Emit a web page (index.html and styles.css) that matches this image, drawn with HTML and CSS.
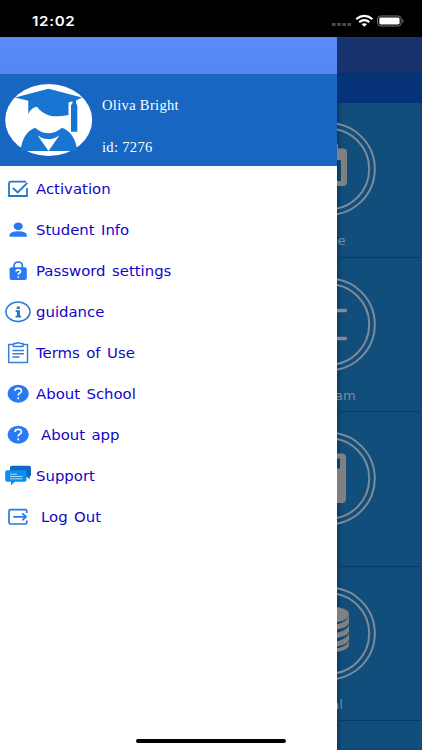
FILE: index.html
```html
<!DOCTYPE html>
<html lang="en">
<head>
<meta charset="utf-8">
<title>Student menu</title>
<link rel="stylesheet" href="styles.css">
</head>
<body>
<div class="phone">
  <header class="status">
    <span class="time">12:02</span>
    <svg class="signals" width="74" height="14" viewBox="0 0 74 14">
      <g fill="#4b4b4b"><rect x="1" y="9" width="3.5" height="3"/><rect x="6.3" y="9" width="3.5" height="3"/><rect x="11.4" y="9" width="3.5" height="3"/><rect x="16.5" y="9" width="3.5" height="3"/></g>
      <g fill="none" stroke="#fff" stroke-width="2.1"><path d="M25.2 5.1Q33.3-1.3 41.4 5.1"/><path d="M28.2 8.1Q33.3 4 38.4 8.1"/></g>
      <path d="M30.5 10.1Q33.3 8.2 36.1 10.1L33.3 12.7Z" fill="#fff"/>
      <rect x="46.6" y="2" width="23.6" height="10" rx="3" fill="none" stroke="#777"/>
      <rect x="48.3" y="3.6" width="20.3" height="6.8" rx="1.4" fill="#fff"/>
      <path d="M71.5 5v4q1.2-.5 1.2-2t-1.2-2" fill="#777"/>
    </svg>
  </header>
  <div class="body">
    <aside class="drawer">
      <div class="bar"></div>
      <section class="profile">
        <svg class="avatar" width="88" height="72" viewBox="0 0 88 72">
          <ellipse cx="43.7" cy="36" rx="43.5" ry="36" fill="#fff"/>
          <g fill="#1875d2">
            <path d="M10 13.500L43.500 4.700L77 13.500L71 16.500V19L72.300 21.500V47.700H66V21.500L67.500 19V17.300L63.500 18.500V31Q53 33 45 31.700Q37 29.500 32 22.700Q26 23.500 23.300 30V16.800Z"/>
            <path d="M15.500 67Q17.500 48.500 30 43.700Q43.500 55 57 43.700Q70 48.500 72.300 67Z"/>
          </g>
          <path d="M32.500 51.200Q43.500 59 54.500 51.200L43.500 67Z" fill="#fff"/>
        </svg>
        <div class="person"><span>Oliva Bright</span><span>id: 7276</span></div>
      </section>
      <nav class="menu">
        <a class="item"><svg width="28" height="24" viewBox="0 0 28 24"><path d="M22 4.700H7Q5 4.700 5 6.500V19H23V11M9 11L13.700 15.400L23.300 5.800" fill="none" stroke="#2878c3" stroke-width="1.800"/></svg><span>Activation</span></a>
        <a class="item"><svg width="28" height="24" viewBox="0 0 28 24"><g fill="#2979f5"><ellipse cx="14.200" cy="8.300" rx="4.500" ry="3.900"/><path d="M5.500 18.800V17Q6.500 13.300 14.200 13.300T22.900 17V18.800Z"/></g></svg><span>Student Info</span></a>
        <a class="item"><svg width="28" height="24" viewBox="0 0 28 24"><path d="M10 9V7Q10 3 14.200 3T18.400 7V9" fill="none" stroke="#2979f5" stroke-width="1.700"/><rect x="5.600" y="8.300" width="17.200" height="12.700" rx="2" fill="#2979f5"/><path d="M11.900 12.500Q12.200 10.900 14.300 10.900T16.700 12.600Q16.700 13.700 15.200 14.300Q14.300 14.700 14.300 15.800M14.300 17.200V18.800" fill="none" stroke="#fff" stroke-width="1.600"/></svg><span>Password settings</span></a>
        <a class="item"><svg width="28" height="24" viewBox="0 0 28 24"><ellipse cx="14" cy="11.800" rx="12" ry="9.800" fill="none" stroke="#2d7ed3" stroke-width="1.600"/><path d="M12.800 6.500h3v2.500h-3zM11.600 10.300h4.300v5.400h1.300v1.700h-5.600v-1.700h1.300V12h-1.300z" fill="#2574cc"/></svg><span>guidance</span></a>
        <a class="item"><svg width="28" height="24" viewBox="0 0 28 24"><path d="M9.500 3.500H4.700V21.500H23.500V3.500H19M9.500 2.500H12Q14.200 .8 16.500 2.500H19V5.500H9.500ZM8.500 9.500H20M8.500 12.800H20M8.500 16.100H15.500" fill="none" stroke="#357fd4" stroke-width="1.500" stroke-linejoin="round"/></svg><span>Terms of Use</span></a>
        <a class="item"><svg width="28" height="24" viewBox="0 0 28 24"><ellipse cx="14.200" cy="11.700" rx="10.600" ry="9" fill="#2979f5"/><path d="M10.800 9Q11 6.400 14.300 6.400T17.500 9Q17.500 10.300 15.500 11.300Q14.200 12 14.200 13.600M14.200 15.200V17.200" fill="none" stroke="#fff" stroke-width="1.600"/></svg><span>About School</span></a>
        <a class="item wide"><svg width="28" height="24" viewBox="0 0 28 24"><ellipse cx="14.200" cy="11.700" rx="10.600" ry="9" fill="#2979f5"/><path d="M10.800 9Q11 6.400 14.300 6.400T17.500 9Q17.500 10.300 15.500 11.300Q14.200 12 14.200 13.600M14.200 15.200V17.200" fill="none" stroke="#fff" stroke-width="1.600"/></svg><span>About app</span></a>
        <a class="item"><svg width="28" height="24" viewBox="0 0 28 24"><path d="M7.500 1.800H25Q27 1.800 27 3.500V11Q27 12.700 25.500 12.700L26 15L22 12.700H6V3.500Q6 1.800 7.500 1.800" fill="#1268c4"/><path d="M3 6.300H20.500Q22.500 6.300 22.500 8V16Q22.500 17.800 20.500 17.800H11L7 21.300V17.800H3Q1.200 17.800 1.200 16V8Q1.200 6.300 3 6.300" fill="#0790f5"/><path d="M6 10.200H13M6 12.500H18.500M6 14.800H18.500" fill="none" stroke="#a9dcff"/></svg><span>Support</span></a>
        <a class="item wide"><svg width="28" height="24" viewBox="0 0 28 24"><path d="M22.800 8V6Q22.800 4.600 21.300 4.600H6.500Q5 4.600 5 6V17.500Q5 19 6.500 19H21.300Q22.800 19 22.800 17.500V15.500M9.300 11.800H22M18.300 8.300L22 11.800L18.300 15.300" fill="none" stroke="#2c79da" stroke-width="1.700"/></svg><span>Log Out</span></a>
      </nav>
    </aside>
    <main class="page">
      <div class="titlebar"></div>
      <div class="subbar"></div>
      <div class="cell"><svg viewBox="337 0 84 154"><g class="ring"><circle cx="329" cy="66" r="45.800"/><circle cx="329" cy="66" r="40.200"/></g><path class="shape" fill-rule="evenodd" d="M330 41H338V45.500H343Q347 45.500 347 49.500V79Q347 83 343 83H330V78H341V57H330Z"/><text x="337.400" y="141.500">e</text></svg></div>
      <div class="cell"><svg viewBox="337 0 84 154"><g class="ring"><circle cx="329" cy="66.500" r="45.800"/><circle cx="329" cy="66.500" r="40.200"/></g><path class="line" d="M325 52.500H345.500M325 80.500H345.500"/><text x="335" y="142">am</text></svg></div>
      <div class="cell"><svg viewBox="337 0 84 154"><g class="ring"><circle cx="329" cy="66.500" r="45.800"/><circle cx="329" cy="66.500" r="40.200"/></g><path class="shape" fill-rule="evenodd" d="M320 41.500H342Q346 41.500 346 45.500V87Q346 91 342 91H320ZM325 46.500V56.500H340V46.500Z"/></svg></div>
      <div class="cell"><svg viewBox="337 0 84 154"><g class="ring"><circle cx="329" cy="66.500" r="45.800"/><circle cx="329" cy="66.500" r="40.200"/></g><ellipse class="shape" cx="331" cy="47.500" rx="18" ry="8"/><path class="shape" d="M349 49V56Q347 62 331 63V58Q346 57 349 49M349 58V64.500Q347 70.500 331 71.500V66.500Q346 65.500 349 58M349 66.500V73Q347 79 331 80V75Q346 74 349 66.500M349 74.500V79Q347 84 331 86V82Q346 81 349 74.500"/><text x="331.200" y="142">al</text></svg></div>
    </main>
  </div>
  <div class="home"></div>
</div>
</body>
</html>
```
FILE: styles.css
```css
* { box-sizing: border-box; }
body { margin: 0; background: #fff; }
.phone { position: relative; width: 422px; height: 750px; overflow: hidden; display: flex; flex-direction: column; }
.status { height: 37px; flex: none; background: #000; display: flex; justify-content: space-between; align-items: center; padding: 5px 17px 0 32px; }
.time { color: #fff; font: 600 13.5px/18px Inter, sans-serif; letter-spacing: 0.6px; transform: scaleX(1.12); transform-origin: left; }
.body { flex: 1; display: flex; }
.drawer { width: 337px; background: #fff; }
.bar { height: 37px; background: linear-gradient(#5b8bfb, #5686f4); }
.profile { height: 92px; background: #1766c2; display: flex; padding: 10px 0 0 5px; }
.person { display: flex; flex-direction: column; gap: 22px; padding: 12px 0 0 9px; color: #fff; font: 14px/20px "Liberation Serif", serif; letter-spacing: 0.3px; }
.person span { transform: scaleX(1.04); transform-origin: left; }
.menu { padding-top: 2px; }
.item { display: flex; align-items: center; gap: 4px; height: 41px; padding-left: 4px; color: #1306c8; font: 14.4px/20px "DejaVu Sans", sans-serif; word-spacing: 1.6px; }
.item span { transform: scaleX(1.035); transform-origin: left; }
.item svg { overflow: visible; }
.item.wide { gap: 9px; }
.page { width: 85px; background: #124e7c; box-shadow: inset 4px 0 4px -2px #0c355a; }
.titlebar { height: 37px; background: #18346e; border-bottom: 1px solid #102c63; }
.subbar { height: 29px; background: #063278; }
.cell { height: 154.5px; width: 84px; border-right: 1px solid #173a7d; border-bottom: 1.5px solid #083967; }
.cell svg { display: block; width: 84px; height: 154px; }
.ring { fill: none; stroke: #7c8b98; stroke-width: 2; }
.shape { fill: #808080; }
.line { stroke: #858a8e; stroke-width: 3.5; stroke-linecap: round; }
.cell text { fill: #7a8a99; font: 13px "DejaVu Sans", sans-serif; }
.home { position: absolute; left: 136px; bottom: 7px; width: 150px; height: 4px; border-radius: 2px; background: #000; }
```
